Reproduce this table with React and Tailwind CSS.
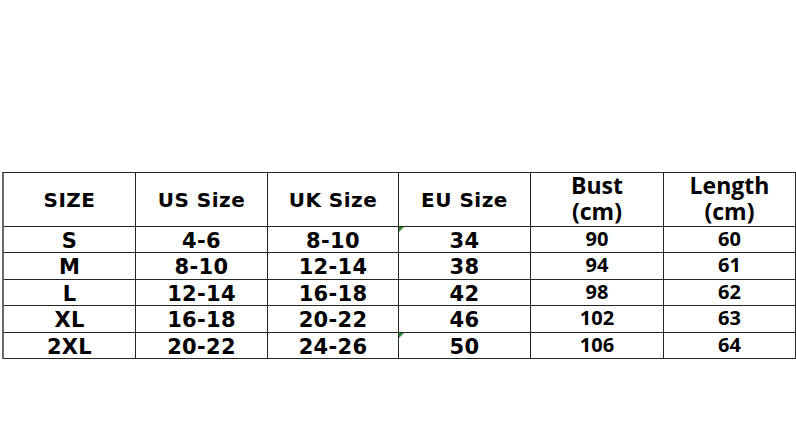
const rows = [
  { size: "S", us: "4-6", uk: "8-10", eu: "34", bust: "90", length: "60", mark: true },
  { size: "M", us: "8-10", uk: "12-14", eu: "38", bust: "94", length: "61" },
  { size: "L", us: "12-14", uk: "16-18", eu: "42", bust: "98", length: "62" },
  { size: "XL", us: "16-18", uk: "20-22", eu: "46", bust: "102", length: "63" },
  { size: "2XL", us: "20-22", uk: "24-26", eu: "50", bust: "106", length: "64", mark: true },
];

const rowHeights = ["h-[26px]", "h-[27px]", "h-[26px]", "h-[27px]", "h-[26px]"];

const verdanaHead = "font-['DejaVu_Sans',Verdana,sans-serif] font-bold text-[20px] tracking-[0.5px]";
const verdana = "font-['DejaVu_Sans',Verdana,sans-serif] font-bold text-[21px] tracking-[0.3px] pt-[3px]";
const calibri = "font-['Open_Sans',sans-serif] font-bold text-[20px] pb-[2px]";

const Cell = ({ children, className = "", mark }) => (
  <div
    className={`relative flex items-center justify-center border-r border-b border-[#262626] text-black ${className}`}
  >
    {mark && (
      <span className="absolute left-0 top-0 w-0 h-0 border-t-[5px] border-r-[5px] border-t-[#2e8b2e] border-r-transparent" />
    )}
    {children}
  </div>
);

const TwoLine = ({ top }) => (
  <Cell className="h-[54px] flex-col font-['Open_Sans',sans-serif] font-bold text-[23px] pb-[3px]">
    <span className="leading-[26px]">{top}</span>
    <span className="leading-[26px]">(cm)</span>
  </Cell>
);

export default function App() {
  return (
    <div className="w-[796px] h-[430px] bg-white overflow-hidden pt-[172px]">
      <div className="ml-[2px] border-l-2 border-l-[#6b6b6b] border-t border-t-[#262626] grid grid-cols-[132px_132px_131px_132px_133px_132px]">
        {/* header */}
        <Cell className={`h-[54px] leading-none ${verdanaHead}`}>SIZE</Cell>
        <Cell className={`h-[54px] leading-none ${verdanaHead}`}>US Size</Cell>
        <Cell className={`h-[54px] leading-none ${verdanaHead}`}>UK Size</Cell>
        <Cell className={`h-[54px] leading-none ${verdanaHead}`}>EU Size</Cell>
        <TwoLine top="Bust" />
        <TwoLine top="Length" />

        {rows.map((r, i) => (
          <div key={r.size} className="contents">
            <Cell className={`${rowHeights[i]} leading-none ${verdana}`}>{r.size}</Cell>
            <Cell className={`${rowHeights[i]} leading-none ${verdana}`}>{r.us}</Cell>
            <Cell className={`${rowHeights[i]} leading-none ${verdana}`}>{r.uk}</Cell>
            <Cell className={`${rowHeights[i]} leading-none ${verdana}`} mark={r.mark}>{r.eu}</Cell>
            <Cell className={`${rowHeights[i]} leading-none ${calibri}`}>{r.bust}</Cell>
            <Cell className={`${rowHeights[i]} leading-none ${calibri}`}>{r.length}</Cell>
          </div>
        ))}
      </div>
    </div>
  );
}
